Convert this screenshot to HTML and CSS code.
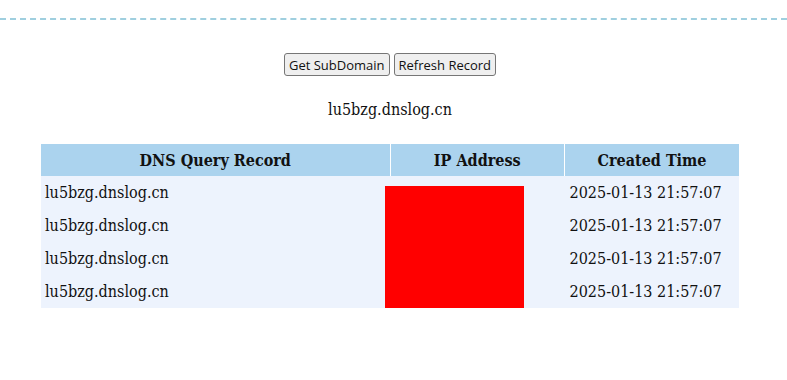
FILE: index.html
```html
<!DOCTYPE html>
<html lang="en">
<head>
    <meta charset="UTF-8">
    <meta name="viewport" content="width=device-width, initial-scale=1.0">
    <title>DNSLog</title>
    <link rel="stylesheet" href="styles.css">
</head>
<body>
    <div class="topline"></div>

    <div class="actions">
        <input type="button" value="Get SubDomain">
        <input type="button" value="Refresh Record">
    </div>

    <div class="domain">lu5bzg.dnslog.cn</div>

    <div class="records">
        <table class="list">
            <thead>
                <tr>
                    <th class="c1">DNS Query Record</th>
                    <th class="c2">IP Address</th>
                    <th class="c3">Created Time</th>
                </tr>
            </thead>
            <tbody>
                <tr><td>lu5bzg.dnslog.cn</td><td></td><td>2025-01-13 21:57:07</td></tr>
                <tr><td>lu5bzg.dnslog.cn</td><td></td><td>2025-01-13 21:57:07</td></tr>
                <tr><td>lu5bzg.dnslog.cn</td><td></td><td>2025-01-13 21:57:07</td></tr>
                <tr><td>lu5bzg.dnslog.cn</td><td></td><td>2025-01-13 21:57:07</td></tr>
            </tbody>
        </table>
        <div class="mask"></div>
    </div>
</body>
</html>
```

FILE: styles.css
```css
* {
  font-family: "DejaVu Serif Condensed", "DejaVu Serif", serif;
}
body {
  margin: 0;
  background: #fff;
  color: #111;
}
.topline {
  margin: 18px 0 0 0;
  border-top: 2px dashed #9fcfdf;
}
.actions {
  margin-top: 33px;
  display: flex;
  justify-content: center;
  gap: 4px;
  padding-right: 7px;
}
.actions input {
  font-family: "Open Sans", sans-serif;
  font-size: 13px;
  height: 23px;
  padding: 0 4px;
  background: #efefef;
  border: 1px solid #767676;
  border-radius: 3px;
  color: #111;
}
.domain {
  margin-top: 24px;
  text-align: center;
  font-size: 16px;
  padding-right: 7px;
}
.records {
  position: relative;
  width: 698px;
  margin: 25px 0 0 41px;
}
.list {
  width: 100%;
  border-collapse: collapse;
  font-size: 16px;
}
.list th {
  background: #abd3ee;
  height: 32px;
  padding: 0;
  font-weight: bold;
  border-left: 1px solid #fff;
}
.list th:first-child {
  border-left: none;
}
.list .c1 { width: 50%; }
.list .c2 { width: 25%; }
.list td {
  background: #edf3fd;
  height: 33px;
  padding: 0 5px;
  vertical-align: middle;
}
.list td:first-child {
  padding-left: 4px;
}
.mask {
  position: absolute;
  left: 344px;
  top: 42px;
  bottom: -4px;
  width: 139px;
  background: #ff0000;
}
```
